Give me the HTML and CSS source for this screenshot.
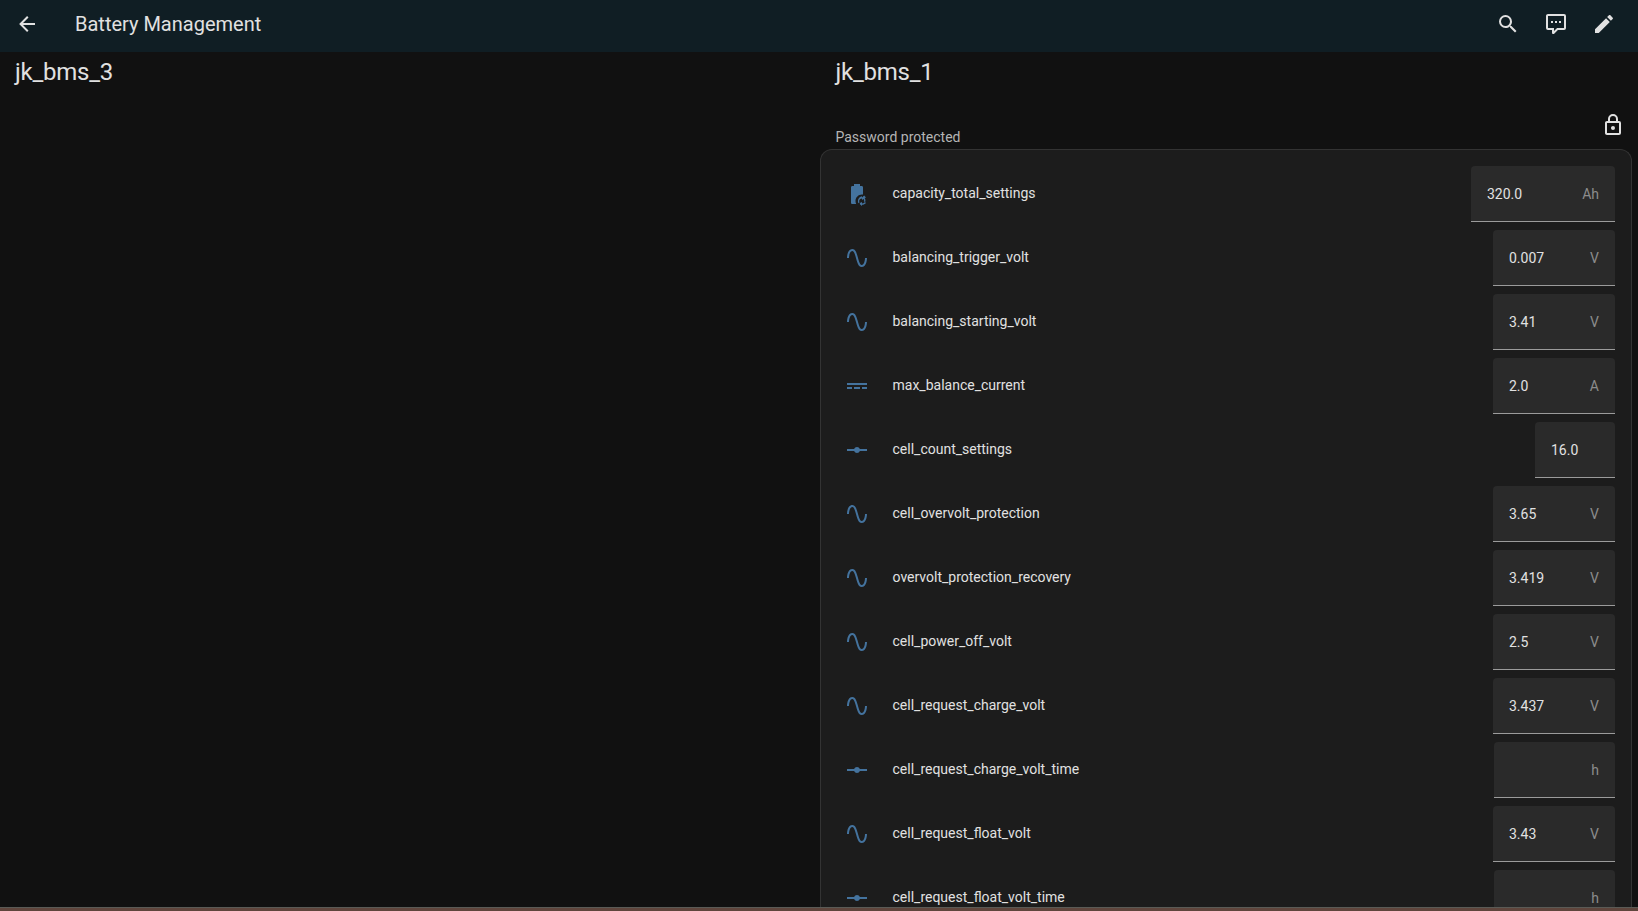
FILE: index.html
```html
<!DOCTYPE html>
<html lang="en">
<head>
<meta charset="utf-8">
<title>Battery Management</title>
<link rel="stylesheet" href="styles.css">
</head>
<body>
<svg class="sprite" aria-hidden="true">
  <symbol id="sine" viewBox="0 0 24 24"><path d="M16.5,21C13.5,21 12.31,16.76 11.05,12.28C10.14,9.04 9,5 7.5,5C4.11,5 4,11.93 4,12H2C2,11.63 2.06,3 7.5,3C10.5,3 11.69,7.24 12.95,11.72C13.86,14.96 15,19 16.5,19C19.94,19 20.03,12.07 20,12H22C22,12.37 21.94,21 16.5,21Z"/></symbol>
  <symbol id="dc" viewBox="0 0 24 24"><path d="M2,9H22V11H2V9M2,13H7V15H2V13M9,13H15V15H9V13M17,13H22V15H17V13Z"/></symbol>
  <symbol id="vertex" viewBox="0 0 24 24"><path d="M2 11H9.17C9.58 9.83 10.69 9 12 9S14.42 9.83 14.83 11H22V13H14.83C14.42 14.17 13.31 15 12 15S9.58 14.17 9.17 13H2V11Z"/></symbol>
  <symbol id="batsync" viewBox="0 0 24 24"><path d="M6 5.33C6 4.6 6.6 4 7.33 4H9V2H15V4H16.67C17.4 4 18 4.6 18 5.33V12.6C17.6 12.5 17.3 12.5 17 12.5C13.4 12.5 10.5 15.4 10.5 19C10.5 20 10.7 21.1 11.2 22H7.33C6.6 22 6 21.4 6 20.67Z"/><path d="M17 14.2V15.5L19.2 13.6L21 15.6L19.6 16.1C20.4 17.1 20.7 18.6 20.2 19.9L19 19.4C19.3 18.5 19.1 17.6 18.6 16.9L17 18V16.6C15.5 16.6 14.2 17.7 14.2 19.1C14.2 19.6 14.3 20 14.5 20.4L13.5 21.2C13.1 20.6 12.9 19.9 12.9 19.1C12.9 16.5 14.9 14.4 17 14.2ZM20.5 17.4ZM14.9 20.9L17 20V21.4C18.3 21.4 19.3 20.8 20 20L20.9 20.9C20 22 18.6 22.7 17 22.7V24L14.9 22.2Z"/></symbol>
</svg>

<header class="topbar">
  <svg class="icon back" viewBox="0 0 24 24"><path d="M20,11V13H8L13.5,18.5L12.08,19.92L4.16,12L12.08,4.08L13.5,5.5L8,11H20Z"/></svg>
  <div class="app-title">Battery Management</div>
  <div class="actions">
    <svg class="icon" viewBox="0 0 24 24"><path d="M9.5,3A6.5,6.5 0 0,1 16,9.5C16,11.11 15.41,12.59 14.44,13.73L14.71,14H15.5L20.5,19L19,20.5L14,15.5V14.71L13.73,14.44C12.59,15.41 11.11,16 9.5,16A6.5,6.5 0 0,1 3,9.5A6.5,6.5 0 0,1 9.5,3M9.5,5C7,5 5,7 5,9.5C5,12 7,14 9.5,14C12,14 14,12 14,9.5C14,7 12,5 9.5,5Z"/></svg>
    <svg class="icon" viewBox="0 0 24 24"><path d="M9,22A1,1 0 0,1 8,21V18H4A2,2 0 0,1 2,16V4C2,2.89 2.9,2 4,2H20A2,2 0 0,1 22,4V16A2,2 0 0,1 20,18H13.9L10.2,21.71C10,21.9 9.75,22 9.5,22V22H9M10,16V19.08L13.08,16H20V4H4V16H10M17,11V9H15V11H17M13,11V9H11V11H13M9,11V9H7V11H9Z"/></svg>
    <svg class="icon" viewBox="0 0 24 24"><path d="M20.71,7.04C21.1,6.65 21.1,6 20.71,5.63L18.37,3.29C18,2.9 17.35,2.9 16.96,3.29L15.12,5.12L18.87,8.87M3,17.25V21H6.75L17.81,9.93L14.06,6.18L3,17.25Z"/></svg>
  </div>
</header>

<main class="columns">
  <section class="col">
    <h2 class="section-title">jk_bms_3</h2>
  </section>
  <section class="col col-right">
    <h2 class="section-title">jk_bms_1</h2>
    <div class="card-head">
      <span class="card-label">Password protected</span>
      <svg class="icon lock" viewBox="0 0 24 24"><path d="M12,17C10.89,17 10,16.1 10,15C10,13.89 10.89,13 12,13A2,2 0 0,1 14,15A2,2 0 0,1 12,17M18,20V10H6V20H18M18,8A2,2 0 0,1 20,10V20A2,2 0 0,1 18,22H6C4.89,22 4,21.1 4,20V10C4,8.89 4.89,8 6,8H7V6A5,5 0 0,1 12,1A5,5 0 0,1 17,6V8H18M12,3A3,3 0 0,0 9,6V8H15V6A3,3 0 0,0 12,3Z"/></svg>
    </div>
    <div class="card">
      <div class="row"><svg class="row-icon"><use href="#batsync"/></svg><span class="row-name">capacity_total_settings</span><div class="field w-ah"><span class="val">320.0</span><span class="unit">Ah</span></div></div>
      <div class="row"><svg class="row-icon"><use href="#sine"/></svg><span class="row-name">balancing_trigger_volt</span><div class="field w-v"><span class="val">0.007</span><span class="unit">V</span></div></div>
      <div class="row"><svg class="row-icon"><use href="#sine"/></svg><span class="row-name">balancing_starting_volt</span><div class="field w-v"><span class="val">3.41</span><span class="unit">V</span></div></div>
      <div class="row"><svg class="row-icon"><use href="#dc"/></svg><span class="row-name">max_balance_current</span><div class="field w-v"><span class="val">2.0</span><span class="unit">A</span></div></div>
      <div class="row"><svg class="row-icon"><use href="#vertex"/></svg><span class="row-name">cell_count_settings</span><div class="field w-none"><span class="val">16.0</span></div></div>
      <div class="row"><svg class="row-icon"><use href="#sine"/></svg><span class="row-name">cell_overvolt_protection</span><div class="field w-v"><span class="val">3.65</span><span class="unit">V</span></div></div>
      <div class="row"><svg class="row-icon"><use href="#sine"/></svg><span class="row-name">overvolt_protection_recovery</span><div class="field w-v"><span class="val">3.419</span><span class="unit">V</span></div></div>
      <div class="row"><svg class="row-icon"><use href="#sine"/></svg><span class="row-name">cell_power_off_volt</span><div class="field w-v"><span class="val">2.5</span><span class="unit">V</span></div></div>
      <div class="row"><svg class="row-icon"><use href="#sine"/></svg><span class="row-name">cell_request_charge_volt</span><div class="field w-v"><span class="val">3.437</span><span class="unit">V</span></div></div>
      <div class="row"><svg class="row-icon"><use href="#vertex"/></svg><span class="row-name">cell_request_charge_volt_time</span><div class="field w-h"><span class="val"></span><span class="unit">h</span></div></div>
      <div class="row"><svg class="row-icon"><use href="#sine"/></svg><span class="row-name">cell_request_float_volt</span><div class="field w-v"><span class="val">3.43</span><span class="unit">V</span></div></div>
      <div class="row"><svg class="row-icon"><use href="#vertex"/></svg><span class="row-name">cell_request_float_volt_time</span><div class="field w-h"><span class="val"></span><span class="unit">h</span></div></div>
    </div>
  </section>
</main>

<div class="strip"></div>
</body>
</html>
```

FILE: styles.css
```css
* {
  box-sizing: border-box;
}

html,
body {
  margin: 0;
  height: 911px;
  overflow: hidden;
}

body {
  display: flex;
  flex-direction: column;
  background: #111111;
  color: #e1e1e1;
  font-family: Roboto, "Liberation Sans", sans-serif;
}

.sprite {
  display: none;
}

.topbar {
  flex: none;
  height: 52px;
  display: flex;
  align-items: center;
  background: #101e24;
  padding: 0 22px 4px 15px;
}

.icon {
  width: 24px;
  height: 24px;
  fill: #e1e1e1;
  display: block;
}

.app-title {
  margin-left: 36px;
  font-size: 20px;
  font-weight: 400;
}

.actions {
  margin-left: auto;
  display: flex;
  gap: 24px;
}

.columns {
  flex: 1;
  min-height: 0;
  overflow: hidden;
  display: grid;
  grid-template-columns: 820px 818px;
}

.col-right {
  padding-right: 6px;
}

.section-title {
  margin: 0;
  padding: 4px 0 0 15px;
  font-size: 24px;
  font-weight: 400;
  line-height: 32px;
  letter-spacing: -0.25px;
}

.col-right .section-title {
  padding-left: 15.5px;
}

.card-head {
  height: 61px;
  display: flex;
  align-items: flex-end;
  justify-content: space-between;
  padding: 0 7px 3px 15.5px;
}

.card-label {
  font-size: 14px;
  line-height: 20px;
  color: #b5b5b5;
  margin-bottom: -1px;
}

.lock {
  margin-bottom: 9px;
}

.card {
  border: 1px solid #333333;
  border-bottom: 0;
  border-radius: 12px 12px 0 0;
  background: #1c1c1c;
  padding: 16px 16px 0 24px;
  display: flex;
  flex-direction: column;
  gap: 8px;
}

.row {
  height: 56px;
  flex: none;
  display: flex;
  align-items: center;
}

.row-icon {
  width: 24px;
  height: 24px;
  fill: #44739e;
  flex: none;
}

.row-name {
  margin-left: 23.5px;
  margin-bottom: 2px;
  font-size: 14px;
  color: #e1e1e1;
}

.field {
  margin-left: auto;
  height: 56px;
  display: flex;
  align-items: center;
  justify-content: space-between;
  padding: 0 16px;
  background: #2a2a2a;
  border-radius: 4px 4px 0 0;
  border-bottom: 1px solid #9b9b9b;
  font-size: 14px;
}

.w-ah {
  width: 144px;
}

.w-v {
  width: 122px;
}

.w-h {
  width: 121px;
}

.w-none {
  width: 80px;
}

.val {
  color: #e1e1e1;
}

.unit {
  color: #8c8c8c;
}

.strip {
  flex: none;
  height: 4px;
  background: #5f453c;
  border-top: 1px solid #5a5a55;
}
```
